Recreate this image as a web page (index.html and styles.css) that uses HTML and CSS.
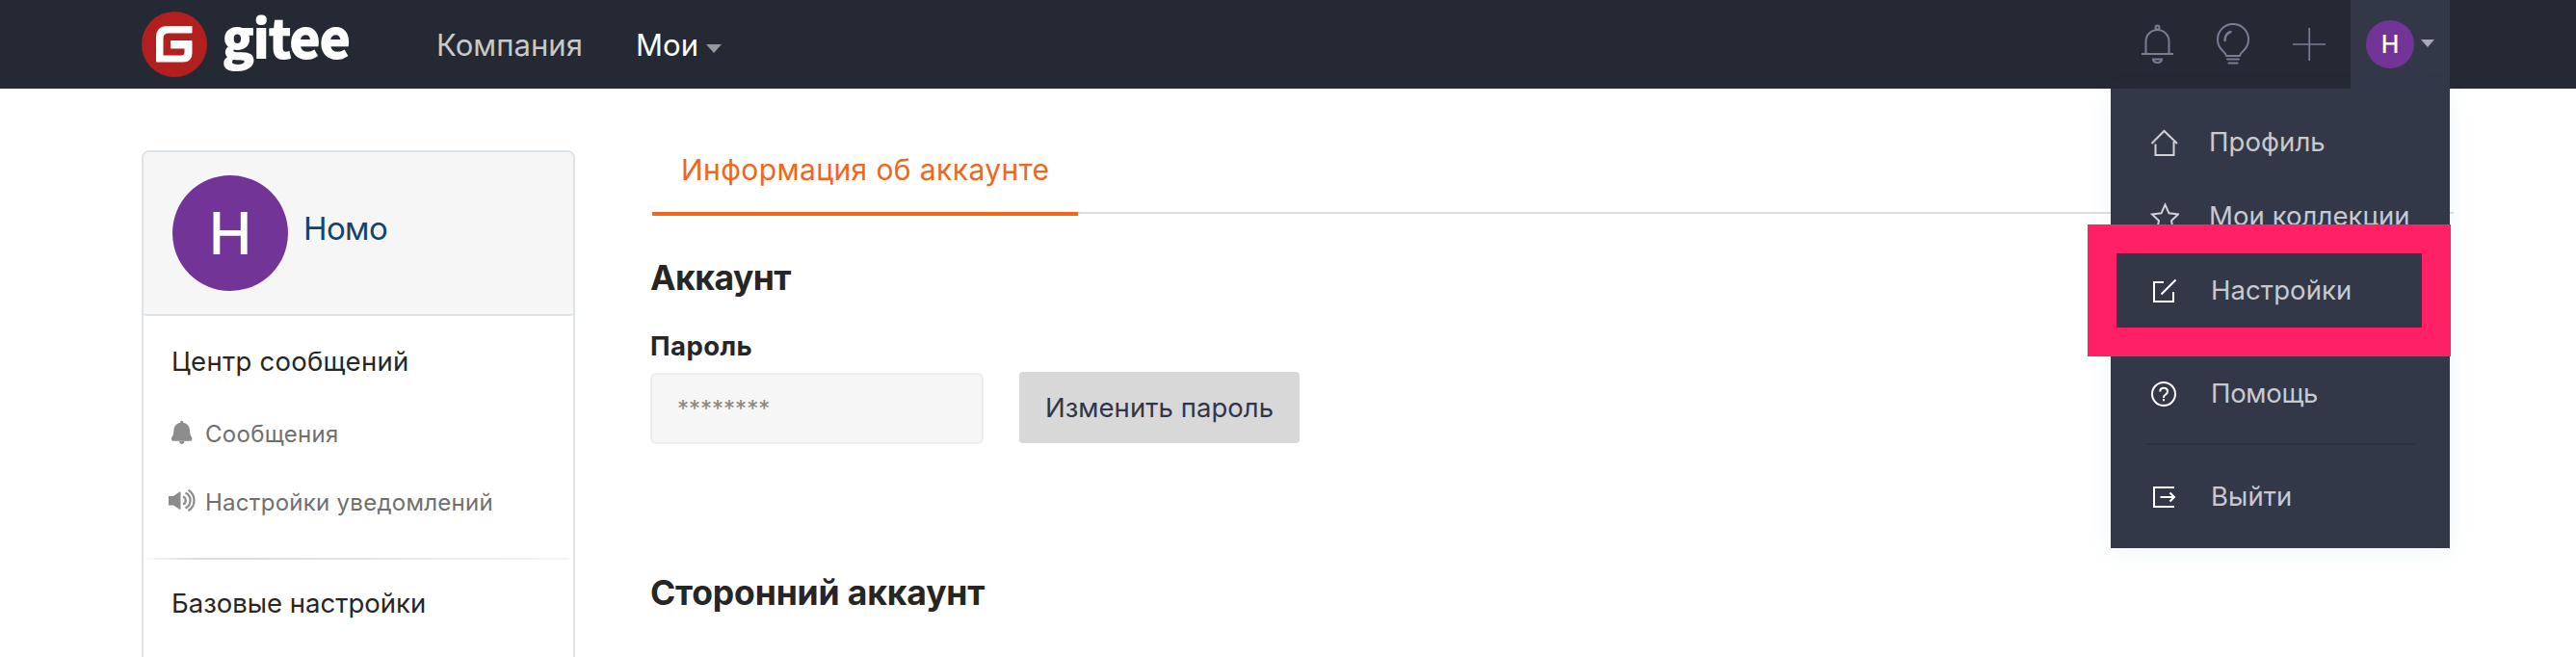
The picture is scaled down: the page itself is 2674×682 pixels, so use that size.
FILE: index.html
```html
<!DOCTYPE html>
<html lang="ru">
<head>
<meta charset="utf-8">
<title>Gitee</title>
<link rel="stylesheet" href="styles.css">
</head>
<body>
<header class="header">
  <a class="logo">
    <svg width="68" height="68" viewBox="147 12 68 68"><circle cx="181" cy="46" r="34" fill="#b1201f"/><path d="M199.500 27v6.500a1 1 0 0 1-1 1H175q-5.500 0-5.500 5.500v17.500h18.500q3.500 0 3.500-3.500v-3.500H178a1 1 0 0 1-1-1V43a1 1 0 0 1 1-1h20.500a1 1 0 0 1 1 1v12q0 9.500-9.500 9.500H163a1 1 0 0 1-1-1V39q0-12 12-12z" fill="#fff"/></svg>
    <span class="wordmark">gitee</span>
  </a>
  <nav class="nav">
    <a class="nav-item">Компания</a>
    <a class="nav-item nav-active">Мои <i class="caret"></i></a>
  </nav>
  <div class="tools">
    <svg width="34" height="42" viewBox="2224 25 34 42" fill="none" stroke="#787d93" stroke-width="2"><circle cx="2240.500" cy="28.500" r="2"/><path d="M2228.500 55V43a12 12 0 0 1 24 0V55M2224 56h33"/><path d="M2236 61.500h9q-.5 3.500-4.500 3.500t-4.500-3.500z"/></svg>
    <svg width="36" height="44" viewBox="2300 24 36 44" fill="none" stroke="#787d93" stroke-width="2"><path d="M2311 58q-1-3-3.500-5a16 16 0 1 1 21 0q-2.500 2-3.500 5z"/><path d="M2309.500 42q0-7 6-9" stroke-width="2.500" stroke-linecap="round"/><path d="M2312 61.500h12M2313.500 65.500h9" stroke-linecap="round"/></svg>
    <svg width="36" height="36" viewBox="2379 29 36 36" stroke="#787d93" stroke-width="1.700"><path d="M2397.200 30v34M2380 47h34"/></svg>
  </div>
  <div class="user">
    <span class="avatar avatar-sm">H</span>
    <i class="caret caret-sm"></i>
    <div class="menu">
      <a class="menu-item">
        <svg width="32" height="32" viewBox="2230 132 32 32" fill="none" stroke="#cfd1d6" stroke-width="2"><path d="M2233.500 149l13-13 13.500 13M2237.500 149.500V161h19V147"/></svg>
        <span class="menu-text">Профиль</span>
      </a>
      <a class="menu-item">
        <svg width="32" height="32" viewBox="2230 209 32 32" fill="none" stroke="#cfd1d6" stroke-width="2"><path d="M2247.500 212.500l4 8.800 9.500 1.200-7 6.500 1.800 9.500-8.300-4.600-8.300 4.600 1.800-9.500-7-6.500 9.500-1.200z"/></svg>
        <span class="menu-text">Мои коллекции</span>
      </a>
      <a class="menu-item wide">
        <svg width="32" height="32" viewBox="2230 285 32 32" fill="none" stroke="#fff" stroke-width="2"><path d="M2246 292h-10v20h20v-10M2243.500 304.500l15-15"/></svg>
        <span class="menu-text">Настройки</span>
        <i class="highlight"></i>
      </a>
      <hr class="rule">
      <a class="menu-item wide">
        <svg width="32" height="32" viewBox="2230 393 32 32" fill="none" stroke="#fff" stroke-width="2"><circle cx="2246" cy="409" r="12"/><path d="M2242.200 406.500q0-3.800 3.900-3.800t3.900 3.500q0 2-2 3.300t-2 3v.5M2246 414v2.200"/></svg>
        <span class="menu-text help">Помощь</span>
      </a>
      <hr class="rule">
      <a class="menu-item wide">
        <svg width="32" height="32" viewBox="2230 500 32 32" fill="none" stroke="#fff" stroke-width="2"><path d="M2257 506h-21v20h21M2242.500 516h14M2252.500 511.500l4.500 4.500-4.500 4.500"/></svg>
        <span class="menu-text">Выйти</span>
      </a>
    </div>
  </div>
</header>

<div class="page">
  <aside class="sidebar">
    <div class="profile">
      <span class="avatar avatar-lg">H</span>
      <span class="name">Номо</span>
    </div>
    <div class="group">
      <div class="group-title title-first">Центр сообщений</div>
      <a class="link">
        <svg width="28" height="28" viewBox="175 435 28 28" fill="#8c8c8c"><path d="M187.200 438c0-1.600 3-1.600 3 0v.8c4.500 1 6.600 4 6.800 8 .2 3.800.6 5.200 2 7 .7 1 .6 4-1 4h-18.600c-1.600 0-1.700-3-1-4 1.400-1.800 1.800-3.200 2-7 .2-4 2.300-7 6.800-8z"/><path d="M186 458h5.500q-.5 3-2.700 3t-2.800-3z"/></svg>
        <span class="link-text">Сообщения</span>
      </a>
      <a class="link">
        <svg width="28" height="28" viewBox="175 506 28 28"><path d="M175 515h5l6.500-4.500q1-.6 1 .6v17q0 1.200-1 .6L180 524.500h-5z" fill="#8c8c8c"/><path d="M190 515.500q2.800 1.200 2.800 4t-2.800 4M192.500 511.500q5 2.500 5 8t-5 8M195.500 508.800q6 3.500 6 10.700t-6 10.500" fill="none" stroke="#8c8c8c" stroke-width="2.200"/></svg>
        <span class="link-text">Настройки уведомлений</span>
      </a>
    </div>
    <div class="fade"></div>
    <div class="group-title title-next">Базовые настройки</div>
  </aside>

  <main class="content">
    <div class="tabs"><a class="tab">Информация об аккаунте</a></div>
    <h2 class="heading heading-account">Аккаунт</h2>
    <label class="label">Пароль</label>
    <div class="form-row">
      <div class="field">********</div>
      <button class="button">Изменить пароль</button>
    </div>
    <h2 class="heading">Сторонний аккаунт</h2>
  </main>
</div>
</body>
</html>
```
FILE: styles.css
```css
* { box-sizing: border-box; }
body { margin: 0; height: 682px; overflow: hidden; background: #fff; color: #262626; font-family: Inter, sans-serif; }
svg { display: block; flex: none; }

.header { display: flex; align-items: center; height: 92px; padding: 0 131px 0 147px; background: #252933; }
.logo { display: flex; align-items: center; width: 306px; }
.wordmark { margin: -18px 0 0 16px; font: 700 54px/68px "Noto Sans CJK SC", sans-serif; color: #fff; letter-spacing: -.2px; -webkit-text-stroke: 2px #fff; }
.nav { display: flex; flex: 1; gap: 55px; padding-top: 2px; }
.nav-item { display: flex; align-items: center; font-size: 31px; line-height: 40px; color: #c8c9cc; letter-spacing: .05px; }
.nav-active { color: #fff; }
.caret { width: 16px; height: 9px; margin: 7px 0 0 8px; background: #96989d; clip-path: polygon(0 0, 100% 0, 50% 100%); }
.tools { display: flex; align-items: center; gap: 43px; margin-right: 25px; }
.user { position: relative; display: flex; align-items: center; width: 103px; height: 92px; padding-left: 16px; background: #333849; }
.avatar { display: flex; flex: none; align-items: center; justify-content: center; border-radius: 50%; background: #733498; color: #fff; font-weight: 500; }
.avatar-sm { width: 50px; height: 50px; font-size: 25px; }
.caret-sm { width: 14px; height: 8px; margin: -2px 0 0 7px; background: #a7a9b4; }

.menu { position: absolute; top: 92px; right: 0; z-index: 2; width: 352px; height: 477px; padding-top: 17px; background: #333848; box-shadow: 0 4px 24px rgba(0, 130, 150, .07); }
.menu-item { position: relative; display: flex; align-items: center; height: 77px; padding-left: 39px; gap: 31px; font-size: 27.5px; color: #c8cad0; letter-spacing: .08px; }
.menu-item.wide { gap: 33px; }
.menu-text { padding-bottom: 2px; }
.help { letter-spacing: -.3px; }
.rule { height: 2px; margin: 13px 36px 15px; border: 0; background: #2b3042; }
.highlight { position: absolute; top: -30px; left: -24px; width: 377px; height: 137px; border: 30px solid #ff2066; }

.page { display: flex; align-items: flex-start; padding: 64px 127px 0 147px; }
.sidebar { width: 450px; height: 560px; border: 2px solid #dce3e8; border-radius: 8px; }
.profile { display: flex; align-items: flex-start; height: 170px; padding: 24px 30px; border-bottom: 2px solid #dce3e8; border-radius: 6px 6px 3px 3px; background: #f6f6f6; }
.avatar-lg { width: 120px; height: 120px; font-size: 60px; }
.name { margin: 35px 0 0 16px; font-size: 33px; line-height: 40px; color: #10466d; letter-spacing: -.6px; }
.group-title { padding-left: 29px; font-size: 27.5px; line-height: 40px; letter-spacing: 0; }
.title-first { margin-top: 27px; letter-spacing: .27px; }
.link { display: flex; align-items: center; height: 42px; gap: 10px; padding-left: 26px; font-size: 24px; color: #6f6f6f; letter-spacing: .28px; }
.link-text { padding-top: 2px; }
.title-first + .link { margin: 33px 0 29px; }
.fade { height: 2px; margin: 38px 4px 0 2px; background: linear-gradient(90deg, #fafafa, #dcdcdc 12%, #dcdcdc 25%, #f6f6f6); }
.title-next { margin-top: 25px; }

.content { flex: 1; margin-left: 78px; }
.tabs { display: flex; height: 66px; margin-left: 2px; border-bottom: 2px solid #ddd; }
.tab { width: 442px; height: 68px; border-bottom: 4px solid #f1661b; padding-left: 30px; font-size: 30px; line-height: 40px; color: #f1661b; letter-spacing: .4px; white-space: nowrap; }
.heading { margin: 0; font-size: 35.5px; font-weight: 700; line-height: 50px; letter-spacing: -.15px; }
.heading-account { margin-top: 42px; letter-spacing: -.5px; }
.label { display: block; margin-top: 25px; font-size: 27.5px; font-weight: 700; line-height: 40px; letter-spacing: .44px; }
.form-row { display: flex; align-items: center; height: 74px; margin: 7px 0 131px; gap: 37px; }
.field { width: 346px; height: 74px; padding: 0 26px; border: 2px solid #ececec; border-radius: 6px; margin-top: 2px; background: #f6f6f6; color: #858585; font-size: 24px; line-height: 72px; }
.button { width: 291px; height: 74px; padding: 0; border: 0; border-radius: 4px; background: #d8d8d8; color: #30364a; font: 27.5px Inter, sans-serif; letter-spacing: .05px; }
```
